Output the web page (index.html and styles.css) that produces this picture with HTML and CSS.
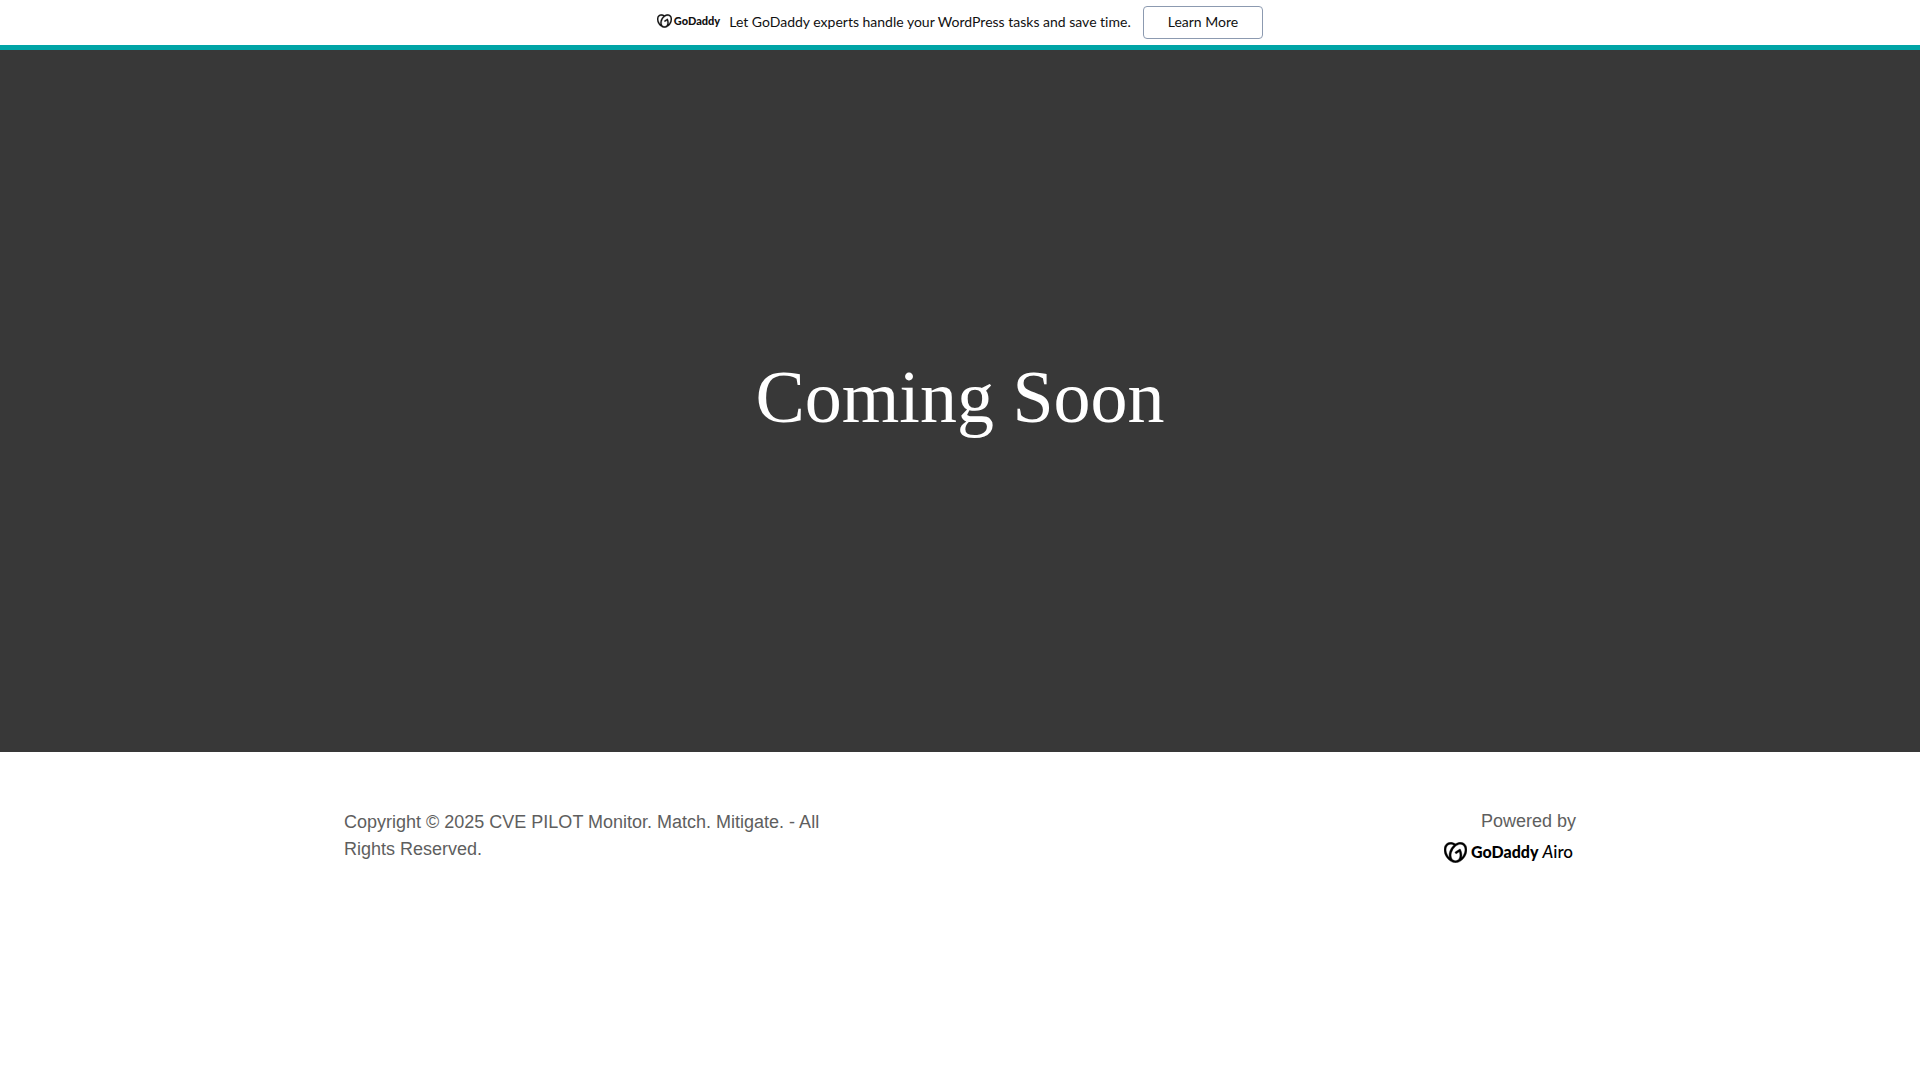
FILE: index.html
```html
<!DOCTYPE html>
<html lang="en">
<head>
  <meta charset="UTF-8">
  <meta name="viewport" content="width=device-width, initial-scale=1">
  <title>Coming Soon</title>
  <link rel="stylesheet" href="styles.css">
</head>
<body>
  <!-- shared heart mark -->
  <svg class="symbols" width="0" height="0" aria-hidden="true">
    <symbol id="heart" viewBox="0 1 24 22">
      <path d="M20.702 2.29c-2.494-1.554-5.778-1.187-8.706.654C9.076 1.104 5.79.736 3.3 2.29c-3.941 2.463-4.42 8.806-1.07 14.167 2.47 3.954 6.333 6.269 9.77 6.226 3.439.043 7.301-2.273 9.771-6.226 3.347-5.361 2.872-11.704-1.069-14.167zM4.042 15.328a12.838 12.838 0 01-1.546-3.541 10.12 10.12 0 01-.336-3.338c.15-1.98.956-3.524 2.27-4.345 1.315-.822 3.052-.87 4.903-.137.281.113.556.24.825.382A15.11 15.11 0 007.5 7.54c-2.035 3.255-2.655 6.878-1.945 9.765a13.247 13.247 0 01-1.514-1.98zm17.465-3.541a12.866 12.866 0 01-1.547 3.54 13.25 13.25 0 01-1.513 1.984c.635-2.589.203-5.76-1.353-8.734a.39.39 0 00-.563-.153l-4.852 3.032a.397.397 0 00-.126.546l.712 1.139a.395.395 0 00.547.126l3.145-1.965c.101.306.203.606.28.916.296 1.086.41 2.214.335 3.337-.15 1.982-.956 3.525-2.27 4.347a4.437 4.437 0 01-2.25.65h-.101a4.432 4.432 0 01-2.25-.65c-1.314-.822-2.121-2.365-2.27-4.347-.074-1.123.039-2.252.335-3.337a13.212 13.212 0 014.05-6.482 10.148 10.148 0 012.849-1.765c1.845-.733 3.586-.685 4.9.137 1.316.821 2.122 2.365 2.271 4.345a10.146 10.146 0 01-.333 3.334z"/>
    </symbol>
  </svg>

  <div class="banner">
    <span class="logo logo-small">
      <svg class="logo-mark"><use href="#heart"/></svg>
      <span class="logo-name">GoDaddy</span>
    </span>
    <span class="banner-text">Let GoDaddy experts handle your WordPress tasks and save time.</span>
    <a class="banner-button" href="#">Learn More</a>
  </div>

  <main class="hero">
    <h1>Coming Soon</h1>
  </main>

  <footer class="footer">
    <p class="copyright">Copyright © 2025 CVE PILOT Monitor. Match. Mitigate. - All Rights Reserved.</p>
    <div class="powered">
      <p>Powered by</p>
      <a class="logo logo-large" href="#">
        <svg class="logo-mark"><use href="#heart"/></svg>
        <span class="logo-name">GoDaddy</span>
        <span class="logo-airo"><i>A</i>iro</span>
      </a>
    </div>
  </footer>
</body>
</html>
```
FILE: styles.css
```css
* { box-sizing: border-box; }
body {
  margin: 0;
  background: #fff;
  color: #5e5e5e;
  font-family: "Liberation Sans", Arial, sans-serif;
  font-size: 18px;
  line-height: 27px;
}
h1, p { margin: 0; }
.symbols { position: absolute; }

/* logo */
.logo {
  display: flex;
  align-items: center;
  color: #000;
  font-family: Lato, sans-serif;
  text-decoration: none;
}
.logo-mark { fill: currentColor; stroke: currentColor; stroke-width: 0.4; }
.logo-name { font-weight: 900; }
.logo-small { gap: 2px; margin-right: 9px; color: #111; font-size: 11px; line-height: 16px; padding-bottom: 4px; }
.logo-small .logo-mark { width: 15px; height: 14px; }
.logo-large { gap: 4px; font-size: 16px; line-height: 24px; padding-right: 3px; }
.logo-large .logo-mark { width: 23px; height: 21px; }
.logo-airo { font-size: 17px; font-weight: 500; }

/* top banner */
.banner {
  display: flex;
  align-items: center;
  justify-content: center;
  min-height: 50px;
  border-bottom: 5px solid #00a4a6;
  color: #111;
  font-family: Lato, sans-serif;
  font-size: 14px;
  font-variant-ligatures: none;
  line-height: 21px;
}
.banner-text { padding-bottom: 3px; }
.banner-button {
  min-width: 120px;
  margin-left: 12px;
  padding: 4px 24px 6px;
  border: 1px solid #8c9ab0;
  border-radius: 4px;
  color: #111;
  text-align: center;
  text-decoration: none;
}
.banner-button:hover { background: #f5f7f8; }

/* hero */
.hero {
  display: flex;
  align-items: center;
  justify-content: center;
  min-height: 65vh;
  padding: 24px 24px 32px;
  background: #383838;
}
.hero h1 {
  color: #fff;
  font-family: "Liberation Serif", "Times New Roman", serif;
  font-size: 74px;
  font-weight: 400;
  line-height: 92px;
  text-align: center;
}

/* footer */
.footer {
  display: flex;
  justify-content: space-between;
  max-width: 1280px;
  margin: 0 auto;
  padding: 56px 24px;
}
.copyright { flex: 0 1 500px; padding-top: 1px; }
.powered {
  display: flex;
  flex-direction: column;
  align-items: flex-end;
  gap: 5px;
}
```
